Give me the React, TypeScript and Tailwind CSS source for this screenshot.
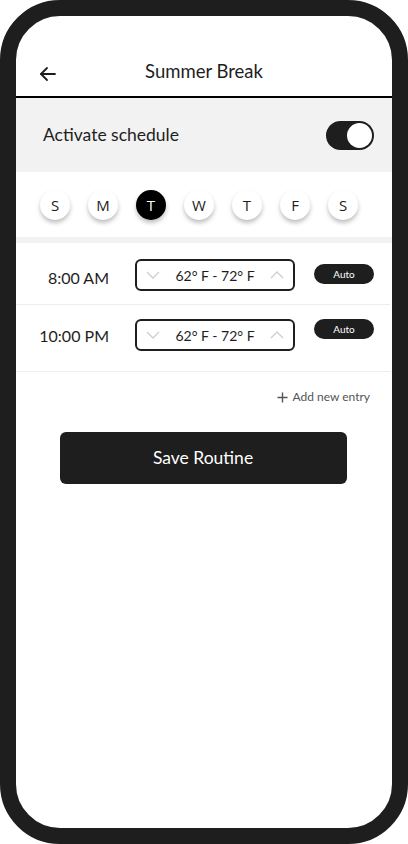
import React from "react";

const hand = { fontFamily: "Lato, 'Noto Sans', sans-serif" } as const;

function ChevronDown() {
  return (
    <svg width="14" height="8" viewBox="0 0 14 8" fill="none">
      <path d="M1 1 L7 7 L13 1" stroke="#cfcfcf" strokeWidth="1.4" />
    </svg>
  );
}
function ChevronUp() {
  return (
    <svg width="14" height="8" viewBox="0 0 14 8" fill="none">
      <path d="M1 7 L7 1 L13 7" stroke="#cfcfcf" strokeWidth="1.4" />
    </svg>
  );
}

function TempBox() {
  return (
    <div className="w-[160px] h-[32px] border-2 border-[#1e1e1e] rounded-[6px] flex items-center justify-between px-[9px]">
      <ChevronDown />
      <span className="text-[14px] text-[#1e1e1e]" style={hand}>62° F - 72° F</span>
      <ChevronUp />
    </div>
  );
}

function Auto() {
  return (
    <div className="w-[60px] h-[20px] rounded-full bg-[#1e1e1e] flex items-center justify-center text-white text-[10px]" style={hand}>
      Auto
    </div>
  );
}

export default function App() {
  const days = ["S", "M", "T", "W", "T", "F", "S"];
  return (
    <div className="w-[408px] h-[844px] bg-white">
      <div className="w-full h-full rounded-[60px] border-[16px] border-[#1e1e1e] bg-white overflow-hidden flex flex-col">
        {/* header */}
        <div className="h-[82px] border-b-2 border-black pt-[40px] relative">
          <div className="h-[32px] flex items-center justify-center">
            <span className="text-[18.5px] text-[#1e1e1e]" style={hand}>Summer Break</span>
          </div>
          <div className="absolute left-[20px] top-[46px]">
            <svg width="24" height="24" viewBox="0 0 24 24" fill="none" stroke="#1e1e1e" strokeWidth="1.8" strokeLinecap="round" strokeLinejoin="round">
              <path d="M19 12H5" />
              <path d="M11 18l-6-6 6-6" />
            </svg>
          </div>
        </div>
        {/* activate */}
        <div className="h-[74px] bg-[#f2f2f2] flex items-center justify-between pl-[27px] pr-[18px]">
          <span className="text-[17.5px] text-[#1e1e1e]" style={hand}>Activate schedule</span>
          <div className="w-[48px] h-[29px] rounded-full bg-[#1e1e1e] flex items-center justify-end pr-[2px]">
            <div className="w-[25px] h-[25px] rounded-full bg-white" />
          </div>
        </div>
        {/* days */}
        <div className="h-[65px] flex items-start pt-[18px] pl-[24px] gap-[18px]">
          {days.map((d, i) => (
            <div
              key={i}
              className={
                i === 2
                  ? "w-[30px] h-[30px] rounded-full bg-black text-white flex items-center justify-center text-[15px] shadow-[0_3px_4px_rgba(0,0,0,0.25)]"
                  : "w-[30px] h-[30px] rounded-full bg-white text-[#1e1e1e] flex items-center justify-center text-[15px] shadow-[0_3px_4px_rgba(0,0,0,0.25)]"
              }
              style={{ fontFamily: "'Open Sans', 'Noto Sans', sans-serif" }}
            >
              {d}
            </div>
          ))}
        </div>
        <div className="h-[6px] bg-[#f2f2f2]" />
        {/* row 1 */}
        <div className="flex items-start pt-[16px] pb-[13px] border-b border-[#eeeeee] mr-[2px]">
          <div className="w-[93px] h-[32px] flex items-center justify-end pt-[6px] text-[16px] text-[#1e1e1e]" style={hand}>8:00 AM</div>
          <div className="ml-[26px]"><TempBox /></div>
          <div className="ml-[19px] mt-[5px]"><Auto /></div>
        </div>
        {/* row 2 */}
        <div className="flex items-start pt-[14px] pb-[20px] border-b border-[#eeeeee] mr-[2px]">
          <div className="w-[93px] h-[32px] flex items-center justify-end pt-[2px] text-[16px] text-[#1e1e1e]" style={hand}>10:00 PM</div>
          <div className="ml-[26px]"><TempBox /></div>
          <div className="ml-[19px]"><Auto /></div>
        </div>
        {/* add entry */}
        <div className="mt-[15px] h-[20px] flex items-center justify-end pr-[22px] gap-[4px] text-[12px] text-[#555555]" style={hand}>
          <svg width="11" height="11" viewBox="0 0 11 11" fill="none" stroke="#555555" strokeWidth="1.4">
            <path d="M5.5 0.5v10M0.5 5.5h10" />
          </svg>
          <span>Add new entry</span>
        </div>
        {/* save */}
        <div className="mt-[25px] flex justify-center pr-[2px]">
          <div className="w-[287px] h-[52px] rounded-[6px] bg-[#1e1e1e] flex items-center justify-center text-white text-[17.5px]" style={hand}>
            Save Routine
          </div>
        </div>
      </div>
    </div>
  );
}
